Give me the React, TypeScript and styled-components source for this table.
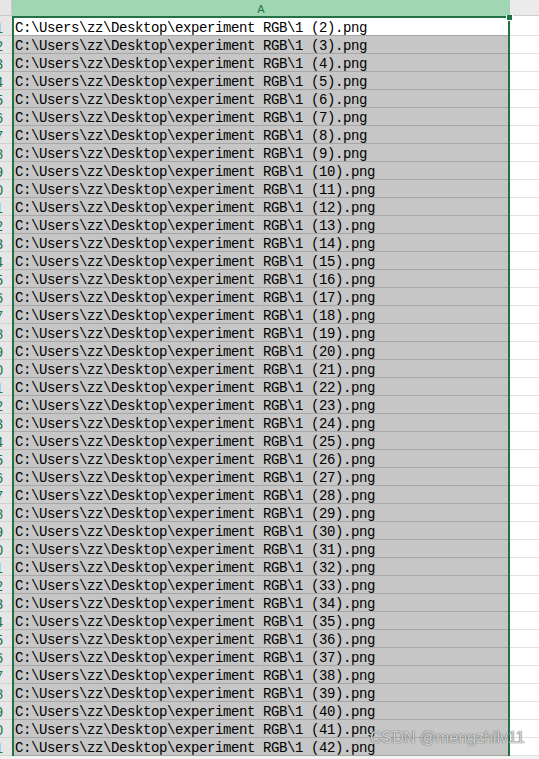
import styled, { createGlobalStyle } from 'styled-components';

const GlobalStyle = createGlobalStyle`
  html, body {
    margin: 0;
    padding: 0;
    background: #f2f2f2;
    overflow: hidden;
  }
`;

const ROWS = Array.from({ length: 41 }, (_, i) => i + 1);

const Sheet = styled.div`
  position: relative;
  width: 539px;
  height: 759px;
  display: grid;
  grid-template-columns: 12px 498px 1fr;
  grid-template-rows: 16px auto 1fr;
  background: #f2f2f2;
  overflow: hidden;
`;

const Corner = styled.div`
  background: #e6e6e6;
  border-bottom: 1px solid #c8c8c8;
  border-right: 1px solid #c8c8c8;
  box-sizing: border-box;
`;

const ColHeader = styled.div<{ $active?: boolean }>`
  display: flex;
  align-items: center;
  justify-content: center;
  box-sizing: border-box;
  background: ${(p) => (p.$active ? '#a0d6b4' : '#ebebeb')};
  border-bottom: 1px solid ${(p) => (p.$active ? '#a0d6b4' : '#d0d0d0')};
  color: #217346;
  font-family: 'Liberation Sans', Arial, sans-serif;
  font-size: 11px;
  padding-top: 3px;
`;

const RowHeaders = styled.div`
  display: flex;
  flex-direction: column;
  padding-top: 2px;
  background: #e6e6e6;
`;

const RowLabel = styled.div`
  display: flex;
  align-items: center;
  justify-content: flex-end;
  overflow: hidden;
  padding: 3px 9px 0 0;
  box-sizing: border-box;
  height: 18px;
  border-bottom: 1px solid #d2d2d2;
  color: #217346;
  font-family: 'Liberation Sans', Arial, sans-serif;
  font-size: 14px;
`;

const Column = styled.div`
  display: flex;
  flex-direction: column;
  border-top: 2px solid #217346;
  border-left: 2px solid #217346;
  border-right: 2px solid #217346;
  background: #c6c6c6;
`;

const Cell = styled.div<{ $active?: boolean }>`
  height: 18px;
  box-sizing: border-box;
  border-bottom: 1px solid #a6a6a6;
  background: ${(p) => (p.$active ? '#ffffff' : '#c6c6c6')};
  padding: 3px 0 0 1px;
  line-height: 14px;
  font-family: 'Liberation Mono', 'Courier New', monospace;
  font-size: 14px;
  letter-spacing: -0.4px;
  color: #000;
  white-space: nowrap;
`;

const EmptyColumn = styled.div`
  display: flex;
  flex-direction: column;
  padding-top: 2px;
  background: #ffffff;
`;

const EmptyCell = styled.div`
  height: 18px;
  box-sizing: border-box;
  border-bottom: 1px solid #e1e1e1;
`;

const FillHandle = styled.div`
  position: absolute;
  left: 506px;
  top: 15px;
  width: 5px;
  height: 5px;
  background: #217346;
  border: 1px solid #ffffff;
  border-top: none;
`;

const Watermark = styled.div`
  position: absolute;
  left: 370px;
  top: 729px;
  font-family: 'Liberation Sans', Arial, sans-serif;
  font-size: 16px;
  color: rgba(255, 255, 255, 0.75);
  text-shadow: 0 0 1px rgba(70, 70, 70, 0.8), 0 0 1px rgba(70, 70, 70, 0.8);
`;

export default function App() {
  return (
    <>
      <GlobalStyle />
      <Sheet>
        <Corner />
        <ColHeader $active>A</ColHeader>
        <ColHeader />
        <RowHeaders>
          {ROWS.map((n) => (
            <RowLabel key={n}>{n}</RowLabel>
          ))}
        </RowHeaders>
        <Column>
          {ROWS.map((n) => (
            <Cell key={n} $active={n === 1}>
              {`C:\\Users\\zz\\Desktop\\experiment RGB\\1 (${n + 1}).png`}
            </Cell>
          ))}
        </Column>
        <EmptyColumn>
          {ROWS.map((n) => (
            <EmptyCell key={n} />
          ))}
        </EmptyColumn>
        <FillHandle />
        <Watermark>CSDN @mengzhilv11</Watermark>
      </Sheet>
    </>
  );
}
